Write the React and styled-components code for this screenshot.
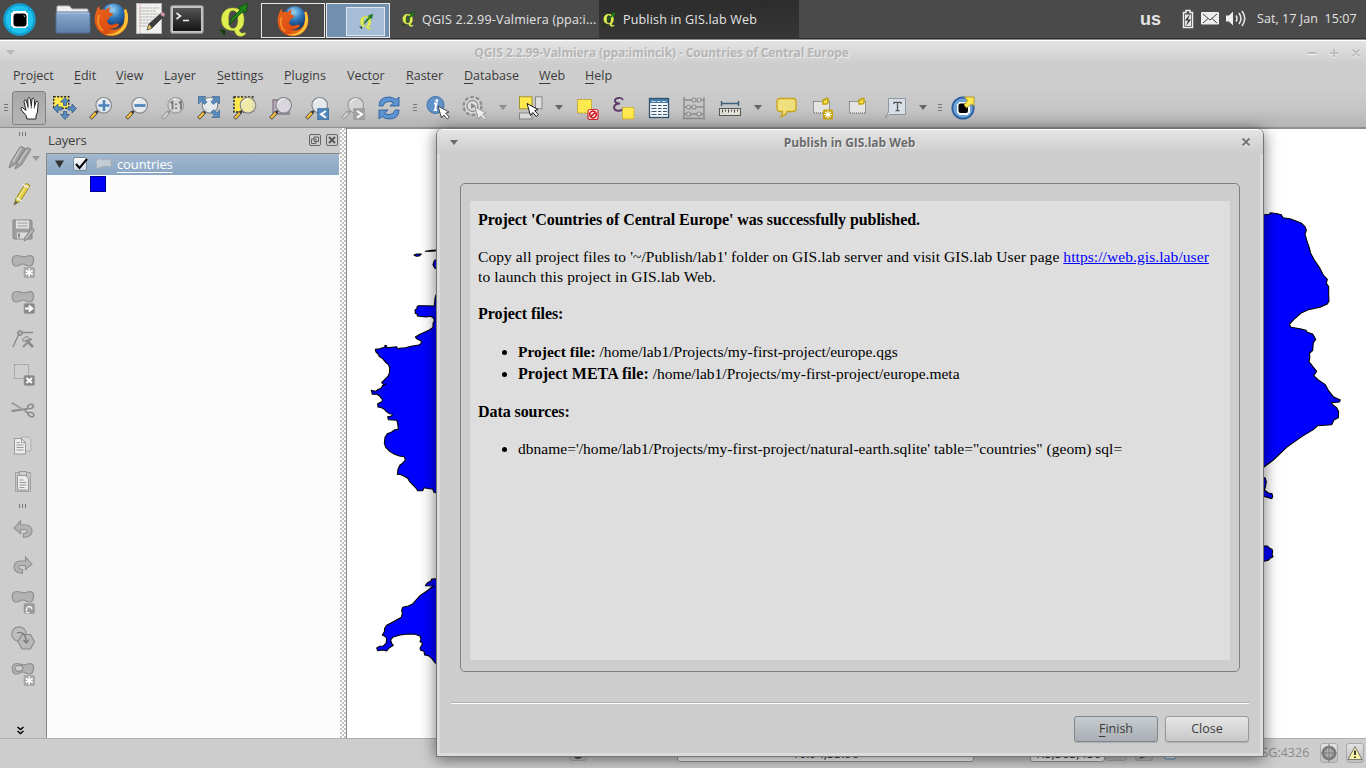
import React from "react";
import styled, { createGlobalStyle, css } from "styled-components";

const GlobalStyle = createGlobalStyle`
  * { box-sizing: border-box; }
  body { margin: 0; background: #cdcdcd; overflow: hidden; }
  svg { display: block; flex: none; }
`;

const ui = `"Open Sans", "Noto Sans", sans-serif`;

const Screen = styled.div`
  position: relative;
  width: 1366px;
  height: 768px;
  overflow: hidden;
  display: flex;
  flex-direction: column;
  font-family: ${ui};
  font-size: 12.5px;
  color: #3c3c3c;
  background: #cdcdcd;
  white-space: nowrap;
`;

/* ---------- desktop panel ---------- */
const Panel = styled.header`
  height: 40px;
  flex: none;
  display: flex;
  align-items: flex-start;
  background: linear-gradient(#4a4a4a 0 38px, #303030 38px 39px, #8b8b8b 39px);
  color: #e4e4e4;
`;
const Launcher = styled.div`
  width: ${(p) => p.$w}px;
  height: 38px;
  display: flex;
  align-items: center;
  justify-content: center;
  flex: none;
`;
const Workspace = styled.div`
  width: ${(p) => p.$w || 64}px;
  height: 35px;
  margin: 3px 1px 0 0;
  flex: none;
  display: flex;
  align-items: center;
  justify-content: ${(p) => (p.$active ? "flex-end" : "center")};
  padding-right: ${(p) => (p.$active ? 4 : 0)}px;
  border: 1px solid #e8e8e8;
  background: ${(p) => (p.$active ? "#7391af" : "#494949")};
`;
const MiniWindow = styled.div`
  width: 39px;
  height: 29px;
  margin-top: 2px;
  display: flex;
  align-items: center;
  justify-content: center;
  border: 1px solid #dfe6ee;
  background: #a7bdd7;
`;
const Task = styled.div`
  width: ${(p) => p.$w}px;
  height: 38px;
  flex: none;
  display: flex;
  align-items: center;
  gap: 7px;
  padding-left: ${(p) => p.$pad}px;
  letter-spacing: ${(p) => p.$ls || 0}px;
  background: ${(p) => (p.$active ? "linear-gradient(#2c2c2c, #363636)" : "none")};
`;
const Tray = styled.div`
  height: 37px;
  flex: 1;
  display: flex;
  align-items: center;
  justify-content: flex-end;
  padding-right: 9px;
`;
const Keyboard = styled.span`
  font: bold 18px/20px "Liberation Sans", sans-serif;
  margin-right: 21px;
`;
const Clock = styled.span`
  width: 100px;
  margin-left: 11px;
  white-space: pre;
  letter-spacing: 0.06px;
`;

/* ---------- main window ---------- */
const TitleBar = styled.div`
  height: 24px;
  flex: none;
  display: flex;
  align-items: center;
  padding: 0 5px;
  border-top: 1px solid #fff;
  font-weight: 700;
  font-size: 12px;
  color: ${(p) => (p.$active ? "#6b6b6b" : "#b5b5b5")};
  text-shadow: 1px 1px 0 #eee;
  background: linear-gradient(#e4e4e4, #cecece 22px);
`;
const TitleText = styled.span`
  flex: 1;
  text-align: center;
  letter-spacing: ${(p) => p.$ls || 0}px;
`;
const MenuBar = styled.nav`
  height: 24px;
  flex: none;
  display: flex;
  align-items: center;
  padding: 0 0 2px 13px;
`;
const MenuItem = styled.span`
  width: ${(p) => p.$w}px;
  flex: none;
`;
const Key = styled.span`
  text-decoration: underline;
  text-underline-offset: 3px;
  text-decoration-thickness: 1px;
`;
const ToolBar = styled.div`
  height: 40px;
  flex: none;
  display: flex;
  align-items: center;
  border-bottom: 1px solid #8f8f8f;
  background: linear-gradient(#cdcdcd, #c6c6c6 50%, #b4b4b4);
`;
const Slot = styled.div`
  width: ${(p) => p.$w || 36}px;
  height: 36px;
  flex: none;
  display: flex;
  align-items: center;
  justify-content: center;
  ${(p) => p.$shift && css`padding-left: ${p.$shift}px;`}
`;
const PressedTool = styled.div`
  width: 34px;
  height: 34px;
  margin-right: 1px;
  padding-left: 4px;
  flex: none;
  display: flex;
  align-items: center;
  justify-content: center;
  border: 1px solid #818181;
  border-radius: 3px;
  background: linear-gradient(#a8a8a8, #b5b5b5);
`;
const Grip = styled.div`
  width: ${(p) => (p.$down ? 7 : 4)}px;
  height: ${(p) => (p.$down ? 4 : 7)}px;
  background: repeating-linear-gradient(
    ${(p) => (p.$down ? "90deg" : "180deg")}, #777 0 1px, transparent 1px 3px);
`;
const Work = styled.main`
  flex: 1;
  min-height: 0;
  display: flex;
`;
const SideBar = styled.div`
  width: 46px;
  flex: none;
  display: flex;
  flex-direction: column;
`;
const SideSlot = styled.div`
  height: 36px;
  flex: none;
  display: flex;
  align-items: center;
  padding-left: ${(p) => p.$pad ?? 11}px;
`;
const SideGrip = styled.div`
  height: 12px;
  flex: none;
  padding: 4px 0 0 19px;
`;
const More = styled.div`
  margin: auto 0 3px 17px;
`;
const LayersPanel = styled.section`
  width: 294px;
  flex: none;
  display: flex;
  flex-direction: column;
`;
const LayersHead = styled.div`
  height: 25px;
  flex: none;
  display: flex;
  align-items: center;
  gap: 5px;
  padding: 0 2px 2px 2px;
  font-size: 13px;
`;
const LayersLabel = styled.span`
  flex: 1;
  letter-spacing: -0.15px;
`;
const Tree = styled.div`
  flex: 1;
  border-top: 1px solid #888;
  border-left: 1px solid #888;
  background: #fcfcfc;
`;
const LayerRow = styled.div`
  height: 21px;
  width: 292px;
  display: flex;
  align-items: center;
  padding: 0 0 1px 8px;
  color: #fff;
  background: linear-gradient(#a2b8d0, #89a6c2);
`;
const CheckBox = styled.div`
  width: 14px;
  height: 14px;
  margin: 0 8px 0 9px;
  border: 1px solid #7c8a98;
  border-radius: 2px;
  background: linear-gradient(#fff, #ccd8e4);
`;
const LayerName = styled.span`
  margin-left: 5px;
  font-size: 13px;
  letter-spacing: -0.12px;
  text-decoration: underline;
  text-underline-offset: 3px;
`;
const Swatch = styled.div`
  width: 16px;
  height: 16px;
  margin: 1px 0 0 43px;
  border: 1px solid #00008c;
  background: #00f;
`;
const Splitter = styled.div`
  width: 6px;
  flex: none;
  background: repeating-conic-gradient(#fff 0 25%, #c4c4c4 0 50%) 0 0 / 4px 4px;
`;
const MapView = styled.div`
  flex: 1;
  border-left: 1px solid #888;
  border-top: 1px solid #8f8f8f;
  background: #fff;
`;
const StatusBar = styled.footer`
  height: 30px;
  flex: none;
  display: flex;
  align-items: center;
  border-top: 1px solid #b0b0b0;
  padding: 0 0 2px 569px;
  color: #3c3c3c;
`;
const StatusField = styled.div`
  width: ${(p) => p.$w}px;
  height: 22px;
  margin: 0 0 4px ${(p) => p.$ml}px;
  padding-top: 5px;
  flex: none;
  display: flex;
  align-items: center;
  justify-content: center;
  border: 1px solid #999;
  border-radius: 3px;
  background: #fcfcfc;
`;
const StatusButton = styled.div`
  width: ${(p) => p.$w}px;
  height: 20px;
  margin-left: ${(p) => p.$ml}px;
  margin-bottom: ${(p) => p.$mb || 0}px;
  padding-top: ${(p) => p.$pt || 0}px;
  flex: none;
  display: flex;
  align-items: center;
  justify-content: center;
  border: 1px solid #aaa;
  border-radius: 3px;
  background: linear-gradient(#e2e2e2, #bdbdbd);
`;
const Crs = styled.span`
  width: 63px;
  margin-left: 64px;
  font-size: 12.5px;
  color: #8b8b8b;
`;

/* ---------- dialog ---------- */
const Dialog = styled.div`
  position: absolute;
  left: 436px;
  top: 129px;
  width: 828px;
  height: 628px;
  display: flex;
  flex-direction: column;
  border: 1px solid #767676;
  border-top: 0;
  border-radius: 6px 6px 0 0;
  background: #cdcdcd;
  box-shadow: 0 2px 16px rgba(0, 0, 0, 0.55);
  overflow: visible;
`;
const DialogTitle = styled(TitleBar)`
  padding: 0 12px 0 13px;
  height: 25px;
  border-radius: 6px 6px 0 0;
`;
const DialogBody = styled.div`
  flex: 1;
  display: flex;
  flex-direction: column;
  padding: 29px 11px 11px 11px;
  border: 3px solid #dcdcdc;
  border-top: 0;
`;
const GroupBox = styled.div`
  width: 780px;
  height: 489px;
  margin-left: 9px;
  padding: 17px 9px 11px 9px;
  border: 1px solid #808080;
  border-radius: 5px;
`;
const Page = styled.article`
  height: 459px;
  padding: 9px 8px;
  background: #dedede;
  color: #000;
  font: 15.5px/20px "Liberation Serif", serif;
`;
const Heading = styled.h3`
  margin: 0 0 ${(p) => p.$mb ?? 18}px;
  font-size: 16px;
  line-height: 20px;
  font-weight: 700;
  letter-spacing: -0.07px;
`;
const Para = styled.p`
  margin: -1px 0 17px;
`;
const Run = styled.span`
  letter-spacing: ${(p) => p.$ls}px;
`;
const StrongRun = styled(Run)`
  font-size: 16px;
  font-weight: 700;
`;
const Link = styled.a`
  color: #00f;
  text-decoration: underline;
`;
const List = styled.ul`
  margin: 0 0 18px;
  padding-left: 40px;
`;
const Item = styled.li`
  margin-bottom: 2px;
`;
const Divider = styled.div`
  height: 2px;
  margin: 30px 0 12px;
  border-top: 1px solid #b0b0b0;
  border-bottom: 1px solid #fff;
`;
const Buttons = styled.div`
  display: flex;
  justify-content: flex-end;
  gap: 7px;
`;
const Button = styled.button`
  width: 84px;
  height: 26px;
  padding: 0 0 2px;
  font: 12.5px ${ui};
  color: #3c3c3c;
  border: 1px solid ${(p) => (p.$primary ? "#7f8790" : "#999")};
  border-radius: 3px;
  box-shadow: 0 1px 1px rgba(0, 0, 0, 0.15);
  background: ${(p) => (p.$primary ? "linear-gradient(#c6cbcf, #a9afb4)" : "linear-gradient(#e6e6e6, #c8c8c8)")};
`;

/* ---------- icons ---------- */
const Icon = ({ s = 24, w, h, vb, children }) => (
  <svg width={w || s} height={h || s} viewBox={vb || `0 0 ${w || s} ${h || s}`} fill="none">{children}</svg>
);

const Triangle = ({ c = "#666", w = 9 }) => (
  <svg width={w} height="5" viewBox="0 0 9 5" preserveAspectRatio="none"><path d="M0 0h9L4.5 5z" fill={c} /></svg>
);

const GisLab = ({ s = 33, ring = "#1fc3ee", edge = "#12a0d0" }) => (
  <Icon s={s} vb="0 0 33 33">
    <circle cx="16.500" cy="16.500" r="15" fill={ring} stroke={edge} strokeWidth="2.500" />
    <path d="M6 6l6 5M27 6l-6 5M6 27l6-5M27 27l-6-5" stroke={edge} strokeWidth="1.500" />
    <path d="M8 10q2 0 2-2h13q0 2 2 2v13q-2 0-2 2H10q0-2-2-2z" fill="#fff" />
    <rect x="10.500" y="10.500" width="13" height="13" rx="3" fill="#000" />
    <path d="M20 12.500l2 0 0 2z" fill="#bbb" />
  </Icon>
);

const Folder = () => (
  <Icon w={36} h={32}>
    <defs><linearGradient id="fold" x1="0" y1="0" x2="0" y2="1"><stop stopColor="#8fabce" /><stop offset="1" stopColor="#5b7da8" /></linearGradient></defs>
    <path d="M2 13V4q0-1 1-1h11q1 0 2 2l1 1h15q1 0 1 1v6z" fill="#f1f1f1" stroke="#bbb" />
    <rect x="1" y="9" width="34" height="21" rx="1.500" fill="url(#fold)" stroke="#50709b" />
    <path d="M2 10h32" stroke="#b6cbe3" />
  </Icon>
);

const Firefox = ({ s = 35 }) => (
  <Icon s={s} vb="0 0 35 35">
    <defs>
      <radialGradient id="globe" cx=".5" cy=".25" r=".7"><stop stopColor="#8fd0f2" /><stop offset=".5" stopColor="#2d74b8" /><stop offset="1" stopColor="#123569" /></radialGradient>
      <linearGradient id="fox" x1="0" y1="0" x2="1" y2="1"><stop stopColor="#e8661b" /><stop offset=".6" stopColor="#dd4c12" /><stop offset="1" stopColor="#f9a824" /></linearGradient>
    </defs>
    <circle cx="19" cy="14" r="12.500" fill="url(#globe)" />
    <path d="M12 6q3-3 7-3l-2 3 4 1-3 4-4-1z" fill="#9ccbe6" opacity=".6" />
    <path d="M32 7c3 6 3 15-1 20-5 7-15 9-22 5C1 28-1 18 2 10c0 0 1-4 3-6l1 4c2-1 4-1 6 0 1-2 3-3 4-3l-1 5c1 1 4 1 4 2 0 2-3 2-4 3 0 2 0 3-2 3 0 4 4 6 8 4 2-1 4 0 4 1-3 4-8 4-10 3 5 4 13 1 15-6 1-5 1-9 0-12z" fill="url(#fox)" />
    <path d="M32 7c4 8 2 18-5 23-5 4-12 4-16 2 9 1 17-3 19-11 1-5 1-9 0-13z" fill="#fbc53a" />
    <path d="M5 13c-2 6-1 12 4 16" stroke="#f99b2d" strokeWidth="1.500" />
  </Icon>
);

const Notepad = () => (
  <Icon w={31} h={34}>
    <rect x="1.500" y="1.500" width="25" height="30" fill="#f0f0ee" stroke="#b5b5b5" />
    <path d="M4 6h20M4 9h17M4 12h19M4 15h16M4 18h14M4 21h13M4 24h9" stroke="#b3b3b3" strokeDasharray="3 .5" />
    <path d="M5 2v29" stroke="#e3a7a7" strokeWidth=".6" />
    <path d="M12 28l2-6L26 11l3 3L17 26z" fill="#3d3d3d" stroke="#222" strokeWidth=".6" />
    <path d="M12 28l2-6 3 4z" fill="#e9c65c" stroke="#444" strokeWidth=".5" />
    <path d="M25 12l2-2q2 0 3 3l-2 2z" fill="#d894b4" stroke="#777" strokeWidth=".5" />
  </Icon>
);

const Terminal = () => (
  <Icon w={34} h={29}>
    <defs><linearGradient id="term" x1="0" y1="0" x2="0" y2="1"><stop stopColor="#555" /><stop offset="1" stopColor="#151515" /></linearGradient></defs>
    <rect x=".7" y=".7" width="32.500" height="27.500" rx="1.500" fill="#c6c6c6" stroke="#999" />
    <rect x="3" y="3" width="28" height="23" fill="url(#term)" />
    <path d="M6.500 8l4 3-4 3M13 15.500h6" stroke="#eee" strokeWidth="1.600" />
  </Icon>
);

const Qgis = ({ w = 29, h = 36 }) => (
  <Icon w={w} h={h} vb="0 0 29 36">
    <path d="M0 28l6.500 1.500-1 5-2-2z" fill="#123d0c" />
    <path fillRule="evenodd" d="M13.500 7C21 7 25 11.500 25 18.500c0 5-1.500 8.500-5 10.500 1 3 3 4 6 2.500l.5 1.500c-4 4-9.500 3-11-3.500C7 30 2.500 25.500 2.500 18.500 2.500 11.500 7 7 13.500 7zM13.500 9.500C10.500 10 9.500 13 9.500 18.500s1 9 4.500 9 5-3.500 5-9-1.500-9.500-5.500-9z" fill="#e0ee50" stroke="#aac22f" strokeWidth=".5" />
    <path d="M10 24L12.500 17.500l9-9-2.500-2L28.500 2l-1.500 10-2.500-2-9.500 9z" fill="#1f8517" stroke="#0d4a0c" strokeWidth=".8" />
  </Icon>
);

const Battery = () => (
  <Icon w={12} h={20}>
    <path d="M4 1.500h4v2h2.500v15h-9v-15H4z" stroke="#eee" strokeWidth="1.500" />
    <rect x="3" y="5.500" width="6" height="11.500" fill="#e4e4e4" />
    <path d="M8 5l-5 6.500h3L4 17l5-6.500H6z" fill="#333" />
  </Icon>
);
const Mail = () => (
  <Icon w={18} h={13}>
    <rect width="18" height="12.500" rx="1" fill="#eee" />
    <path d="M2 2l7 6 7-6M2 11l5-4.500M16 11l-5-4.500" stroke="#444" />
  </Icon>
);
const Speaker = () => (
  <Icon w={20} h={17}>
    <path d="M0 5.500h3l4-4v14l-4-4H0z" fill="#eee" />
    <path d="M10 5.500q2 3 0 6M13 3q4 5.500 0 11M16 1q5.500 7.500 0 15" stroke="#e4e4e4" strokeWidth="1.600" />
  </Icon>
);

const windowMarks = "M1 5h8M23 5h8M27 1v8M45.500 1.500l7 7M52.500 1.500l-7 7";
const WindowButtons = () => (
  <svg width="54" height="10" viewBox="0 0 54 10" stroke="#bcbcbc" strokeWidth="1.800">
    <path d={windowMarks} stroke="#f3f3f3" transform="translate(0 1)" />
    <path d={windowMarks} />
  </svg>
);

const Cursor = ({ x, y, c = "#333", f = "#fff" }) => (
  <path transform={`translate(${x} ${y})`} d="M0 0l3.500 12 2.300-3 3.500 4 2-1.800-3.600-4L11 6z" fill={f} stroke={c} strokeWidth=".9" />
);

const Hand = () => (
  <Icon>
    <path d="M8 23l-1-3.500L2.300 14q-1.300-2.500 1-2.500l3.700 3L5 5.500Q5 3.300 7 4l2 6.500L8.800 2.500q1-2 2.400 0L12.300 10l.7-7q1.400-1.700 2.400.3L15.500 10.500l1.500-5q1.800-1 2.200 1L18.500 16l-1.500 4v3z" fill="#fff" stroke="#222" />
    <path d="M9 10v2.500M12.300 9.500v3M15.400 10v2.500" stroke="#555" />
  </Icon>
);

const Arrows = ({ corners }) => corners ? (
  <g fill="#5a8bbf" stroke="#3a6592" strokeWidth=".7">
    <path d="M1.500 .5h7.500L6.800 2.700l3.200 3.200L7.400 8.500 4.200 5.300 1.500 8zM22.500 .5h-7.500L17.200 2.700l-3.200 3.200L16.600 8.500l3.200-3.200L22.500 8zM22.500 21.500h-7.500l2.200-2.200-3.200-3.200 2.600-2.600 3.200 3.200L22.500 14z" />
  </g>
) : (
  <path d="M12 1.500l4.500 4.500h-3v3.500h-3V6h-3zM12 23.500l4.500-5h-3v-3h-3v3h-3zM.5 12.500L5 8v3h4v3H5v3zM23.500 12.500L19 8v3h-4v3h4v3z" fill="#5a8bbf" stroke="#315a86" strokeWidth=".8" />
);

const Pan = () => (
  <Icon><rect x=".7" y=".7" width="15" height="11.500" fill="#ffe94e" stroke="#222" strokeWidth="1.400" strokeDasharray="2 1.500" /><Arrows /></Icon>
);

const Lens = ({ gray, x = 14.7, fill = "#e9edef", under, children }) => (
  <Icon>
    {under}
    <path d="M1.500 22.500L7.500 16" stroke={gray ? "#8a8a8a" : "#444"} strokeWidth="3.600" />
    <path d="M2 22L7 16.500" stroke={gray ? "#d5d5d5" : "#ffc43b"} strokeWidth="2.200" />
    <path d="M7 17L10 13.500" stroke={gray ? "#999" : "#333"} strokeWidth="2.200" />
    <circle cx={x} cy="9.300" r="7.800" fill={gray ? "#d6d6d6" : fill} fillOpacity=".88" stroke={gray ? "#999" : "#85888a"} strokeWidth="1.200" />
    <path d={`M${x - 5.5} 7q2-4 6-4`} stroke="#fff" strokeWidth="1.200" opacity=".7" />
    {children}
  </Icon>
);
const ZoomIn = () => <Lens><path d="M9.500 9.500h11M15 4v11" stroke="#4d82ba" strokeWidth="2.500" /></Lens>;
const ZoomOut = () => <Lens><path d="M9.500 9.500h11" stroke="#4d82ba" strokeWidth="2.700" /></Lens>;
const ZoomNative = () => (
  <Lens gray><path d="M9.500 7l2-1.500v8M18 7l2-1.500v8" stroke="#777" strokeWidth="1.800" /><path d="M15 7.500v1.500M15 11.500V13" stroke="#777" strokeWidth="1.800" /></Lens>
);
const ZoomFull = () => <Lens x={13}><Arrows corners /></Lens>;
const ZoomSelection = () => <Lens x={15} fill="#eee9b5" under={<rect x="1" y="1" width="19" height="15" fill="#ffe94e" stroke="#222" strokeWidth="1.500" strokeDasharray="2 1.500" />} />;
const ZoomLayer = () => <Lens fill="#dedce2" under={<path d="M4 4h16v14H4z" fill="#b9adbb" stroke="#84778a" strokeWidth="1.300" />} />;
const ZoomStep = ({ next }) => (
  <Lens gray={next}>
    <rect x="12.700" y="12.700" width="11" height="11" fill={next ? "#a1a1a1" : "#4f86bd"} stroke={next ? "#999" : "#35699f"} strokeWidth=".7" />
    <path d={next ? "M16 15l5 3.300-5 3.300" : "M21 15l-5 3.300 5 3.300"} stroke="#fff" strokeWidth="2" />
  </Lens>
);
const Refresh = () => (
  <Icon>
    <g fill="#5d93cf" stroke="#2e609c" strokeWidth=".9">
      <path d="M2 10q0-9 10-9 4 0 7 2.500L22 1v9h-9l3.500-3Q14 5 11 5.500 7 6 6 10z" />
      <path d="M22 14q0 9-10 9-4 0-7-2.500L2 23v-9h9l-3.500 3q2.500 2 5.500 1.500 4-.5 5-4.500z" />
    </g>
  </Icon>
);
const Identify = () => (
  <Icon>
    <circle cx="9.500" cy="9" r="8.500" fill="#5f92c8" stroke="#3e6fa7" />
    <circle cx="10.800" cy="4.500" r="1.500" fill="#fff" /><path d="M8 7.500h2.500L9 14h2" stroke="#fff" strokeWidth="2" />
    <Cursor x="12" y="10" />
  </Icon>
);
const Gear = () => (
  <Icon>
    <circle cx="10.500" cy="10" r="8.700" stroke="#8e8e8e" strokeWidth="2.800" strokeDasharray="3.500 2" fill="#c9c9c9" />
    <circle cx="10.500" cy="10" r="7.700" fill="#dadada" /><circle cx="10.500" cy="10" r="5.500" fill="#ddd" stroke="#8e8e8e" strokeWidth="1.300" />
    <path d="M9 7l5 3-5 3z" fill="#8b8b8b" /><Cursor x="13" y="11" c="#999" f="#eee" />
  </Icon>
);
const Select = () => (
  <Icon>
    <g stroke="#888"><rect x=".5" y=".8" width="12.500" height="12" fill="#ffe94e" stroke="#a39228" /><rect x="16.500" y=".8" width="6.500" height="12" fill="#ddd" /><rect x=".5" y="17" width="12.500" height="6" fill="#ddd" /></g>
    <Cursor x="8" y="7.500" c="#000" />
  </Icon>
);
const Deselect = () => (
  <Icon>
    <rect x="2.500" y="3.500" width="14" height="13.500" fill="#ffe94e" stroke="#b49b1d" strokeDasharray="2 1" />
    <rect x="13" y="13.500" width="10" height="10" rx="2" fill="#fff" stroke="#d8242c" strokeWidth="1.200" />
    <circle cx="18" cy="18.500" r="3.300" stroke="#d8242c" strokeWidth="1.700" /><path d="M15.500 20.500l5-4" stroke="#d8242c" strokeWidth="1.700" />
  </Icon>
);
const Expression = () => (
  <Icon>
    <path d="M12 4Q11 1.500 7.500 2 3.500 2.500 4 5q.5 2.500 5 2.500Q3 8 3 11.500 3.500 15 8 14.700q3 0 4.500-2.700" stroke="#5d3a6b" strokeWidth="1.900" />
    <rect x="11.500" y="11.500" width="11.500" height="11.500" fill="#ffe94e" stroke="#c9ac1e" strokeDasharray="2 1" />
  </Icon>
);
const Table = () => (
  <Icon>
    <rect x="2.500" y="2.500" width="19" height="19" fill="#f4f6f8" stroke="#2e536f" strokeWidth="1.300" /><path d="M3 5h18" stroke="#477ba5" strokeWidth="4" />
    <path d="M4.500 5.500h4M10 5.500h3.500M15 5.500h4" stroke="#c5daea" />
    <path d="M4.500 9.500h5M11 9.500h3.500M16 9.500h4M4.500 12.500h5M11 12.500h3.500M16 12.500h4M4.500 15.500h5M11 15.500h3.500M16 15.500h4M4.500 18.500h5M11 18.500h3.500M16 18.500h4" stroke="#365a77" />
  </Icon>
);
const Abacus = () => (
  <Icon>
    <path d="M2 1v21M22 1v21M.5 22.500h23M2 4h20M2 11h20M2 18h20" stroke="#8c8c8c" strokeWidth="1.400" />
    <g fill="#d2d2d2" stroke="#8c8c8c" strokeWidth="1.200"><circle cx="12" cy="4" r="2" /><circle cx="17" cy="4" r="2" /><circle cx="6.500" cy="11" r="2" /><circle cx="12" cy="11" r="2" /><circle cx="6.500" cy="18" r="2" /><circle cx="17" cy="18" r="2" /></g>
  </Icon>
);
const Measure = () => (
  <Icon>
    <path d="M3.500 7.500h17M3.500 5v5M20.500 5v5" stroke="#3c617f" strokeWidth="1.500" />
    <rect x="1.500" y="12.500" width="21" height="7" fill="#e2e2d6" stroke="#555" /><path d="M4.500 13.500v3M7.500 13.500v2M10.500 13.500v3M13.500 13.500v2M16.500 13.500v3M19.500 13.500v2" stroke="#444" />
  </Icon>
);
const Bubble = () => (
  <Icon><path d="M5 2.500h13q3 0 3 3v7q0 3-3 3h-6q-1 4-6 5 2-2 1.500-5H5q-3 0-3-3v-7q0-3 3-3z" fill="#efdf7d" stroke="#c8a21a" strokeWidth="1.300" /></Icon>
);
const Bookmark = ({ add }) => (
  <Icon>
    <rect x="2.500" y="5.500" width="16" height="11.500" fill="#e4e4e2" stroke="#555" strokeDasharray="1 1" />
    <path d="M12 4h2.500V2.500H17v4L15.500 8H12z" fill="#ffe94e" stroke="#c39f10" strokeWidth="1.500" />
    {add && <><rect x="12" y="13.500" width="10" height="10" rx="1.500" fill="#c8a40d" /><path d="M17 14.500v8M13 18.500h8M14.300 15.800l5.400 5.400M19.700 15.800l-5.400 5.400" stroke="#fff" strokeWidth="1.200" /></>}
  </Icon>
);
const TextNote = () => (
  <Icon>
    <path d="M5.500 2.500h17v16H6.500L2 22l3.500-6z" fill="#d9e0e8" stroke="#8d959d" />
    <path d="M11 8V6.300h7V8M14.500 6.500v8M12.500 14.700h4" stroke="#555" strokeWidth="1.300" />
  </Icon>
);
const Publish = () => (
  <Icon>
    <circle cx="12" cy="12" r="10.700" fill="#6fa3d8" stroke="#2b5d9e" strokeWidth="1.700" />
    <path d="M6 8q2 0 2-2h9q0 2 2 2v9q-2 0-2 2H8q0-2-2-2z" fill="#fff" /><rect x="7.500" y="7.500" width="9.500" height="9.500" rx="2" fill="#000" />
    <path d="M13.500 1H23v9l-2.500-2-5 4-2.500-3 3.500-4.500z" fill="#ffe94e" stroke="#a78a12" strokeWidth=".8" />
  </Icon>
);

/* side bar icons, drawn in their disabled grays */
const blob = "M1.200 7C.8 3.500 3 1.500 6 1.500c3.500 0 4.500 1.500 7.500 1.200 2-.2 3.500-1.200 6-1 2.500.3 3.300 2 3 5-.3 3.200-1.500 5.300-4 5.300-3 0-4-2-6.500-2S8 12 5 12c-2.500 0-3.500-2.300-3.800-5z";
const Blob = ({ children }) => (
  <Icon><path d={blob} fill="#b2b2b2" stroke="#8f8f8f" strokeWidth="1.200" />{children}</Icon>
);
const Badge = ({ children, c = "#aaa" }) => (
  <g><rect x="13" y="13.500" width="10.500" height="10" rx="1.500" fill={c} stroke="#999" strokeWidth=".6" />{children}</g>
);
const Star = () => <path d="M18.200 14.500v8M14.700 16.500l7 4M21.700 16.500l-7 4" stroke="#fff" strokeWidth="1.500" />;
const pencil = "M1 23l2-6.500L12 2q3-1 5 1.500L7.500 19z";
const Pencil = ({ c, e = "#888" }) => (
  <Icon>
    <path transform="translate(2 0)" d={pencil} fill={c} stroke={e} />
    <path d="M12 2.500l5.500 3M5.500 16l5 3" stroke="#f2f2f2" strokeWidth="1.500" /><path d="M14 5L7.500 16.500" stroke="#fff" opacity=".6" />
    <path d="M3 23l1.500-4.500 2.500 2z" fill="#666" />
  </Icon>
);
const Pencils = () => (
  <Icon>
    <g fill="#a0a0a0" stroke="#858585"><path transform="translate(0 -1)" d={pencil} /><path transform="translate(6 0)" d={pencil} /></g>
    <path d="M13 2L5 16M19 4L10.500 17" stroke="#d0d0d0" strokeWidth="1.200" />
  </Icon>
);
const Save = () => (
  <Icon>
    <path d="M2 2h18l1 1v18H3l-1-1z" fill="#9e9e9e" stroke="#888" /><rect x="5" y="2.500" width="13" height="8" fill="#e2e2e2" /><path d="M6.500 5h10M6.500 8h10" stroke="#999" />
    <rect x="6" y="14.500" width="11" height="6" fill="#ddd" /><path d="M8 15.500v4" stroke="#888" strokeWidth="2" /><path d="M13 23l1-4 7-9 2.500 2-6.500 9z" fill="#b0b0b0" stroke="#888" />
  </Icon>
);
const NodeTool = () => (
  <Icon>
    <path d="M2 21L8.500 6.500M9 6.500h13" stroke="#888" strokeWidth="1.300" /><circle cx="9" cy="7" r="2.500" fill="#aaa" stroke="#888" />
    <path d="M11.500 15q0-4 5-4.500l2 2.500-2.500 2z" fill="#c8c8c8" stroke="#888" /><path d="M15 14l7 7" stroke="#888" strokeWidth="2.500" />
    <path d="M20.500 12.500L12 21" stroke="#909090" strokeWidth="2" />
  </Icon>
);
const DeleteSel = () => (
  <Icon>
    <rect x="3.500" y="2.500" width="14" height="14" fill="#cfcfcf" stroke="#999" strokeDasharray="2 1" />
    <Badge c="#888"><path d="M15.500 16l5.500 5M21 16l-5.500 5" stroke="#fff" strokeWidth="1.800" /></Badge>
  </Icon>
);
const Scissors = () => (
  <Icon>
    <path d="M1 5l16 10M.5 13l16-2" stroke="#888" strokeWidth="2" /><path d="M2 6l13 8" stroke="#ddd" strokeWidth=".6" />
    <ellipse cx="19.500" cy="8.500" rx="3" ry="2" stroke="#888" strokeWidth="1.500" transform="rotate(-20 19.500 8.500)" /><ellipse cx="20" cy="16.500" rx="3" ry="2" stroke="#888" strokeWidth="1.500" transform="rotate(25 20 16.500)" />
  </Icon>
);
const Copy = () => (
  <Icon>
    <path d="M10.500 3h7l2.500 3v11h-9.500z" fill="#d6d6d6" stroke="#b0b0b0" />
    <path d="M3.500 4.500h7l4 4V20h-11z" fill="#ececec" stroke="#999" /><path d="M10.500 4.500v4h4M5.500 11h7M5.500 13.500h7M5.500 16h7M5.500 8.500h3" stroke="#999" />
  </Icon>
);
const Paste = () => (
  <Icon>
    <rect x="4.500" y="2.500" width="15" height="19" fill="#c4c4c4" stroke="#a2a2a2" /><path d="M6.500 5.500h8l3 3V20h-11z" fill="#ececec" stroke="#999" /><rect x="8.500" y="1.500" width="7" height="4" fill="#ccc" stroke="#999" />
    <path d="M8.500 10h4M8.500 12.500h7M8.500 15h7M8.500 17.500h5" stroke="#999" />
  </Icon>
);
const Undo = ({ redo }) => (
  <Icon><path transform={redo ? "translate(24 0) scale(-1 1)" : ""} d="M3 10l6.500-7v4h5q6.500.5 6.500 6t-8.500 6.500v-4q4-.5 4-2.500 0-1.500-3-1.500h-4v4z" fill="#b4b4b4" stroke="#909090" strokeWidth="1.100" /></Icon>
);
const Rotate = () => <Blob><Badge c="#999"><path d="M15.500 21q-.5-4 3-4.500 2.500 0 2 3M14.500 22.500h4" stroke="#eee" strokeWidth="1.600" /></Badge></Blob>;
const MovePart = () => <Blob><Badge c="#888"><path d="M14 18.500h6M17.800 15.500l3.500 3-3.500 3" stroke="#fff" strokeWidth="1.900" /></Badge></Blob>;
const Simplify = () => (
  <Icon>
    <circle cx="8" cy="8" r="7.200" fill="#bebebe" stroke="#8f8f8f" strokeWidth="1.200" /><path d="M11 8.500h8.500l4 7-4 7.500H11l-4-7.500z" fill="#b9b9b9" stroke="#8a8a8a" strokeWidth="1.200" />
    <path d="M6 7q8-3 9.500 9M12.500 14l3 3 2.500-3.500" stroke="#777" strokeWidth="1.200" />
  </Icon>
);
const Ring = () => <Blob><ellipse cx="8" cy="6.300" rx="4" ry="3" fill="#cdcdcd" stroke="#8f8f8f" strokeWidth="1.200" /><Badge><Star /></Badge></Blob>;

const LandMap = () => (
  <svg width="1019" height="609" viewBox="347 129 1019 609" fill="#00f" stroke="#000" strokeWidth="3.200" strokeLinejoin="round">
    <g transform="translate(340 230) scale(.33333)">
      <path d="M222 75l8-3 14 0-7 6-8 1zM256 64l20-3 16-1v2l-18 2z" />
      <path d="M292 86l-9 6-4 12 5 10 8 4z" />
      <path d="M292 190L288 195 285 205 283 228 258 227 235 227 231 230 231 236 225 240 226 250 232 253 232 258 258 261 272 259 281 264 283 272 279 280 279 292 268 300 250 308 240 313 226 321 230 326 244 333 243 341 236 345 213 349 196 353 178 355 175 357 169 350 140 353 140 347 135 346 134 352 118 356 106 358 108 366 115 373 118 380 128 386 135 395 146 405 149 415 148 430 143 440 133 450 125 458 132 464 139 462 128 466 124 474 113 479 107 484 94 481 97 493 109 492 118 497 124 505 128 509 125 515 113 521 114 531 125 533 132 537 139 545 148 551 157 552 155 558 143 560 145 569 160 570 170 571 173 580 175 597 163 600 155 606 142 611 135 622 133 640 137 652 150 665 160 671 178 678 193 680 196 690 187 700 180 705 174 718 172 733 183 734 193 739 203 745 209 755 220 766 230 777 233 782 248 782 252 773 268 776 278 777 282 787 292 790 300 790 300 190z" />
      <path d="M292 1046L275 1047 273 1053 263 1058 256 1067 280 1068 265 1080 240 1097 228 1110 219 1121 205 1128 188 1132 185 1140 187 1150 184 1162 160 1175 140 1186 134 1195 133 1205 127 1215 137 1220 140 1228 138 1240 130 1248 118 1249 110 1254 113 1262 128 1260 140 1263 146 1255 160 1246 155 1240 152 1230 158 1222 180 1215 205 1212 225 1213 240 1218 243 1228 240 1235 248 1240 240 1255 242 1261 252 1264 254 1275 265 1277 275 1285 285 1298 300 1310 300 1046z" />
    </g>
    <g transform="translate(1220 200) scale(.33333)">
      <path d="M120 46L147 43 152 38 172 41 184 44 189 53 210 56 230 64 245 70 255 80 259 90 255 103 260 120 269 147 272 160 283 180 298 202 310 225 322 238 319 250 326 260 326 285 327 303 322 312 300 322 265 329 245 338 222 358 208 373 213 382 240 386 258 391 262 397 278 402 287 418 280 428 278 452 269 459 269 475 267 485 278 499 290 514 281 527 295 540 316 554 325 571 340 590 361 600 358 606 334 608 339 615 350 623 356 635 355 653 342 660 335 674 293 677 280 689 245 710 200 742 160 780 120 810z" />
      <path d="M120 833L135 833 139 845 136 862 133 870 145 879 156 881 158 890 155 896 136 890 120 888zM120 1038L142 1038 149 1045 156 1048 158 1055 156 1063 159 1070 150 1075 145 1081 120 1087z" />
    </g>
  </svg>
);

const menus = [
  { pre: "P", key: "r", post: "oject", w: 61 },
  { key: "E", post: "dit", w: 42 },
  { key: "V", post: "iew", w: 48 },
  { key: "L", post: "ayer", w: 53 },
  { key: "S", post: "ettings", w: 67 },
  { key: "P", post: "lugins", w: 63 },
  { pre: "Vect", key: "o", post: "r", w: 59 },
  { key: "R", post: "aster", w: 58 },
  { key: "D", post: "atabase", w: 75 },
  { key: "W", post: "eb", w: 46 },
  { key: "H", post: "elp", w: 50 },
];

export default function App() {
  return (
    <>
      <GlobalStyle />
      <Screen>
        <Panel>
          <Launcher $w={38}><GisLab /></Launcher>
          <Launcher $w={16} />
          <Launcher $w={38}><Folder /></Launcher>
          <Launcher $w={39}><Firefox /></Launcher>
          <Launcher $w={38}><Notepad /></Launcher>
          <Launcher $w={36}><Terminal /></Launcher>
          <Launcher $w={56}><Qgis /></Launcher>
          <Workspace><Firefox s={32} /></Workspace>
          <Workspace $active><MiniWindow><Qgis w={14} h={17} /></MiniWindow></Workspace>
          <Task $w={208} $pad={10} $ls={0.2}><Qgis w={14} h={16} />QGIS 2.2.99-Valmiera (ppa:i...</Task>
          <Task $w={200} $pad={3} $ls={0.18} $active><Qgis w={14} h={16} />Publish in GIS.lab Web</Task>
          <Tray>
            <Keyboard>us</Keyboard>
            <Battery />
            <Launcher $w={32}><Mail /></Launcher>
            <Speaker />
            <Clock>Sat, 17 Jan  15:07</Clock>
          </Tray>
        </Panel>
        <TitleBar>
          <Slot $w={11}><Triangle c="#b9b9b9" /></Slot>
          <TitleText $ls={-0.11}>QGIS 2.2.99-Valmiera (ppa:imincik) - Countries of Central Europe</TitleText>
          <WindowButtons />
        </TitleBar>
        <MenuBar>
          {menus.map((m) => (
            <MenuItem key={m.key + m.post} $w={m.w}>{m.pre}<Key>{m.key}</Key>{m.post}</MenuItem>
          ))}
        </MenuBar>
        <ToolBar>
          <Slot $w={12}><Grip /></Slot>
          <PressedTool><Hand /></PressedTool>
          <Slot><Pan /></Slot>
          <Slot><ZoomIn /></Slot>
          <Slot><ZoomOut /></Slot>
          <Slot><ZoomNative /></Slot>
          <Slot><ZoomFull /></Slot>
          <Slot><ZoomSelection /></Slot>
          <Slot><ZoomLayer /></Slot>
          <Slot><ZoomStep /></Slot>
          <Slot><ZoomStep next /></Slot>
          <Slot><Refresh /></Slot>
          <Slot $w={13} $shift={3}><Grip /></Slot>
          <Slot><Identify /></Slot>
          <Slot><Gear /></Slot>
          <Slot $w={21}><Triangle c="#8e8e8e" w={8} /></Slot>
          <Slot><Select /></Slot>
          <Slot $w={20}><Triangle w={8} /></Slot>
          <Slot><Deselect /></Slot>
          <Slot><Expression /></Slot>
          <Slot $w={35}><Table /></Slot>
          <Slot><Abacus /></Slot>
          <Slot><Measure /></Slot>
          <Slot $w={20}><Triangle w={8} /></Slot>
          <Slot $w={37}><Bubble /></Slot>
          <Slot><Bookmark add /></Slot>
          <Slot><Bookmark /></Slot>
          <Slot><TextNote /></Slot>
          <Slot $w={19}><Triangle w={8} /></Slot>
          <Slot $w={13} $shift={3}><Grip /></Slot>
          <Slot><Publish /></Slot>
        </ToolBar>
        <Work>
          <SideBar>
            <SideGrip><Grip $down /></SideGrip>
            <SideSlot $pad={8}><Pencils /><Triangle c="#999" w={8} /></SideSlot>
            <SideSlot><Pencil c="#e3cf45" e="#9a8b2b" /></SideSlot>
            <SideSlot><Save /></SideSlot>
            <SideSlot><Blob><Badge><Star /></Badge></Blob></SideSlot>
            <SideSlot><MovePart /></SideSlot>
            <SideSlot><NodeTool /></SideSlot>
            <SideSlot><DeleteSel /></SideSlot>
            <SideSlot><Scissors /></SideSlot>
            <SideSlot><Copy /></SideSlot>
            <SideSlot><Paste /></SideSlot>
            <SideGrip><Grip $down /></SideGrip>
            <SideSlot><Undo /></SideSlot>
            <SideSlot><Undo redo /></SideSlot>
            <SideSlot><Rotate /></SideSlot>
            <SideSlot><Simplify /></SideSlot>
            <SideSlot><Ring /></SideSlot>
            <More><svg width="7" height="9" viewBox="0 0 7 9" fill="none" stroke="#000" strokeWidth="1.500"><path d="M.5 1l3 2.500 3-2.500M.5 5l3 2.500 3-2.500" /></svg></More>
          </SideBar>
          <LayersPanel>
            <LayersHead>
              <LayersLabel>Layers</LayersLabel>
              <Icon s={12}><rect x=".5" y=".5" width="11" height="11" rx="1.500" stroke="#666" /><path d="M5 3h4.500v4.500H5zM2.500 5h4.500v4.500H2.500z" stroke="#666" /></Icon>
              <Icon s={12}><rect x=".5" y=".5" width="11" height="11" rx="1.500" stroke="#666" /><path d="M3 3l6 6M9 3l-6 6" stroke="#555" strokeWidth="1.800" /></Icon>
            </LayersHead>
            <Tree>
              <LayerRow>
                <svg width="9" height="8" viewBox="0 0 9 8"><path d="M0 .5h9L4.500 8z" fill="#333" /></svg>
                <CheckBox><svg width="16" height="13" viewBox="0 0 16 13" fill="none"><path d="M2 6l3.500 4L13 1" stroke="#000" strokeWidth="2" /></svg></CheckBox>
                <Icon w={17} h={12}><path d="M2 1.500Q4.500 0 7 1.500q3 .8 8-.8l1 1v6l-1 1q-5-1-8 .2Q4 9.500 3 11q-2 0-1.500-3.500Q0 4 2 1.500z" fill="#c3ccd5" stroke="#a5adb5" /></Icon>
                <LayerName>countries</LayerName>
              </LayerRow>
              <Swatch />
            </Tree>
          </LayersPanel>
          <Splitter />
          <MapView><LandMap /></MapView>
        </Work>
        <StatusBar>
          <StatusButton $w={18} $ml={0} $mb={3} $pt={3}><Icon s={14}><circle cx="7" cy="7" r="5" stroke="#333" strokeWidth="1.500" /><path d="M7 3v5h3" stroke="#333" /></Icon></StatusButton>
          <StatusField $w={297} $ml={90}>10.94,53.96</StatusField>
          <StatusField $w={75} $ml={56}>1:5,565,456</StatusField>
          <StatusButton $w={22} $ml={0} $mb={4}><Triangle c="#999" /></StatusButton>
          <StatusButton $w={18} $ml={8} $mb={3} $pt={3}><Icon s={14}><path d="M2 13L12 2v8z" fill="#444" /></Icon></StatusButton>
          <Icon w={30} h={16}><rect x="11" y="0" width="12" height="14" rx="2" fill="#dfe9f3" stroke="#5f8cb5" /></Icon>
          <Crs>EPSG:4326</Crs>
          <StatusButton $w={18} $ml={10}><Icon s={18}><circle cx="9" cy="9" r="6" fill="#b8b8b8" stroke="#777" strokeWidth="2.500" /><path d="M9 0v18M1 9h16" stroke="#777" /><ellipse cx="9" cy="9" rx="3" ry="6" stroke="#888" /></Icon></StatusButton>
          <StatusButton $w={18} $ml={8}><Icon s={16}><path d="M8 1.500L15 14.500H1z" fill="#f7f3a6" stroke="#777" /><path d="M8 5.500v4.500M8 11.500v1.500" stroke="#222" strokeWidth="1.700" /></Icon></StatusButton>
        </StatusBar>

        <Dialog>
          <DialogTitle $active>
            <Triangle c="#6b6b6b" w={8} />
            <TitleText $ls={-0.04}>Publish in GIS.lab Web</TitleText>
            <Icon s={10}><path d="M1.500 2.500l7 7M8.500 2.500l-7 7" stroke="#f3f3f3" strokeWidth="2" /><path d="M1.500 1.500l7 7M8.500 1.500l-7 7" stroke="#777" strokeWidth="2" /></Icon>
          </DialogTitle>
          <DialogBody>
            <GroupBox>
              <Page>
                <Heading>Project 'Countries of Central Europe' was successfully published.</Heading>
                <Para>
                  <Run $ls={0.073}>Copy all project files to '~/Publish/lab1' folder on GIS.lab server and visit GIS.lab User page <Link>https://web.gis.lab/user</Link></Run>
                  <br /><Run $ls={0.12}>to launch this project in GIS.lab Web.</Run>
                </Para>
                <Heading>Project files:</Heading>
                <List>
                  <Item><b>Project file:</b> /home/lab1/Projects/my-first-project/europe.qgs</Item>
                  <Item><StrongRun $ls={0.04}>Project META file:</StrongRun> /home/lab1/Projects/my-first-project/europe.meta</Item>
                </List>
                <Heading $mb={17}>Data sources:</Heading>
                <List>
                  <Item><Run $ls={0.02}>dbname='/home/lab1/Projects/my-first-project/natural-earth.sqlite' table="countries" (geom) sql=</Run></Item>
                </List>
              </Page>
            </GroupBox>
            <Divider />
            <Buttons>
              <Button $primary><Key>F</Key>inish</Button>
              <Button>Close</Button>
            </Buttons>
          </DialogBody>
        </Dialog>
      </Screen>
    </>
  );
}
